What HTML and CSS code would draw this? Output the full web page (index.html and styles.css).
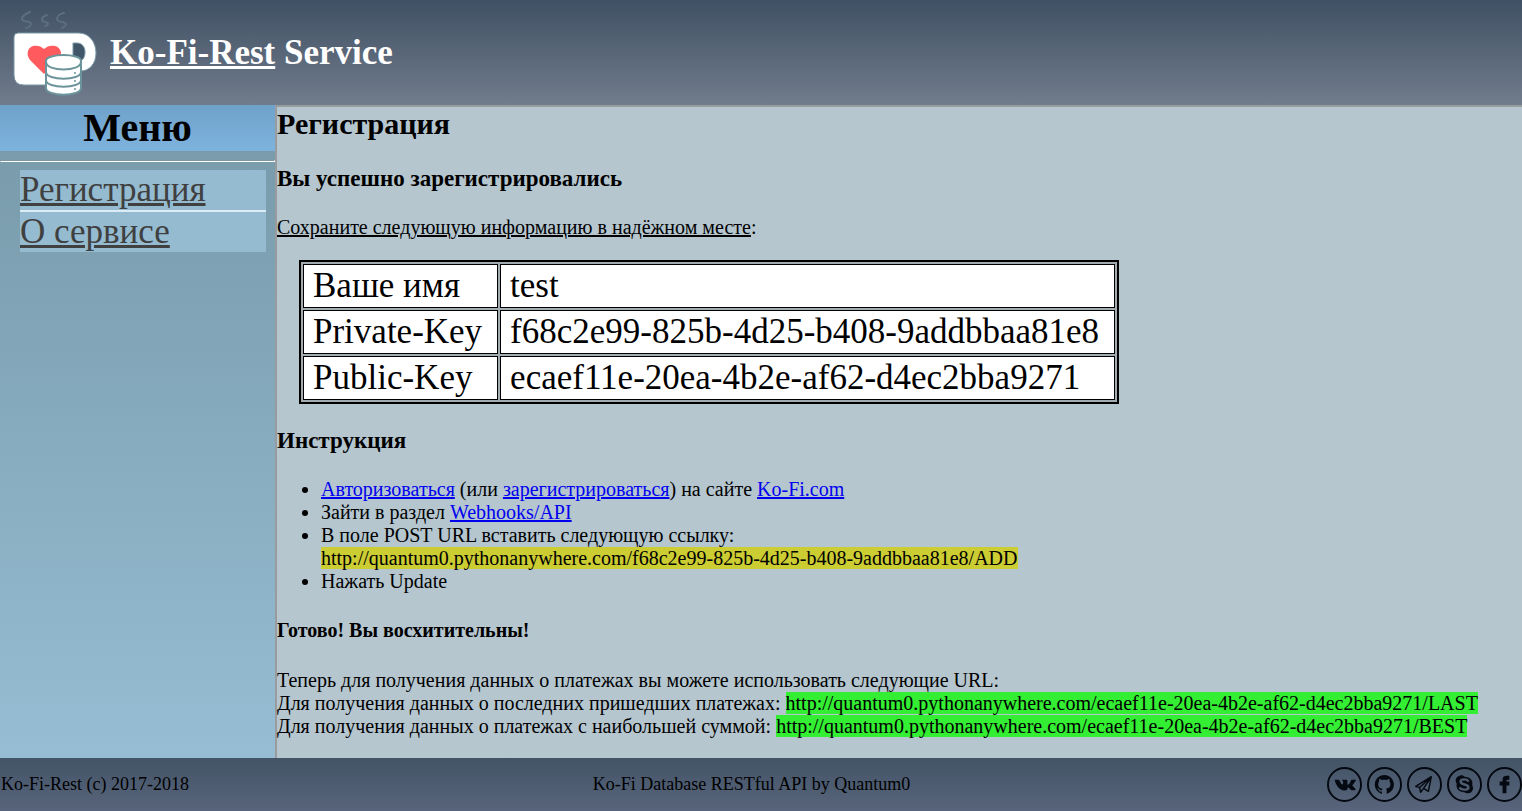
FILE: index.html
```html
<!DOCTYPE html>
<html lang="ru">
<head>
<meta charset="utf-8">
<title>Ko-Fi-Rest Service</title>
<link rel="stylesheet" href="styles.css">
</head>
<body>
<header class="header">
  <svg class="logo" viewBox="0 0 110 105" aria-hidden="true">
    <g fill="none" stroke="#5d6e80" stroke-width="2" stroke-linecap="round" stroke-linejoin="round">
      <path d="M30 12c-5 2-8 4-8 7 0 4 9 1 9 5 0 2-3 4-5 4"/>
      <path d="M47 15c-4 1-5 3-5 5 0 3 6 1 6 4 0 1-2 2-3 2"/>
      <path d="M64 13c-5 1-7 4-7 6 0 4 9 2 9 5 0 2-2 3-4 4"/>
    </g>
    <path fill="#fff" stroke="#7898a4" stroke-width="1" d="M18 33H79c10 0 17 9 17 20s-7 18-15 18l-9 14H24q-10 0-10-10V37q0-4 4-4Z"/>
    <path fill="#42566a" stroke="#7898a4" stroke-width="1" d="M73 43h4c5 0 8 4 8 9 0 5-2 8-5 9l-7-3Z"/>
    <path fill="#ff5b5f" d="M44 74 30 60c-4-5-3-12 3-14 4-1 8 0 11 3 3-3 7-4 11-3 4 1 6 4 6 8Z"/>
    <path fill="#fff" stroke="#6b949b" stroke-width="2" d="M46 61c0-8 35-8 35 0v27c0 9-35 9-35 0Z"/>
    <path fill="none" stroke="#6b949b" stroke-width="2" d="M46 62c0 10 35 10 35 0M46 72c0 9 35 9 35 0M46 80c0 9 35 9 35 0"/>
    <g fill="#6b949b"><circle cx="75" cy="73" r="1"/><circle cx="75" cy="81" r="1"/><circle cx="75" cy="89" r="1"/></g>
  </svg>
  <h1 class="brand"><a href="#">Ko-Fi-Rest</a> Service</h1>
</header>
<div class="layout">
  <nav class="sidebar" aria-labelledby="menu-title">
    <h2 class="menu-title" id="menu-title">Меню</h2>
    <hr class="menu-rule">
    <ul class="menu">
      <li><a href="#">Регистрация</a></li>
      <li><a href="#">О сервисе</a></li>
    </ul>
  </nav>
  <main class="content">
    <h2 class="page-title">Регистрация</h2>
    <h3 class="section-title">Вы успешно зарегистрировались</h3>
    <p class="note"><u>Сохраните следующую информацию в надёжном месте</u>:</p>
    <table class="keys">
      <tr><th scope="row">Ваше имя</th><td>test</td></tr>
      <tr><th scope="row">Private-Key</th><td>f68c2e99-825b-4d25-b408-9addbbaa81e8</td></tr>
      <tr><th scope="row">Public-Key</th><td>ecaef11e-20ea-4b2e-af62-d4ec2bba9271</td></tr>
    </table>
    <h3 class="section-title">Инструкция</h3>
    <ul class="steps">
      <li><a href="#">Авторизоваться</a> (или <a href="#">зарегистрироваться</a>) на сайте <a href="#">Ko-Fi.com</a></li>
      <li>Зайти в раздел <a href="#">Webhooks/API</a></li>
      <li>В поле POST URL вставить следующую ссылку:<br><span class="mark-yellow">http://quantum0.pythonanywhere.com/f68c2e99-825b-4d25-b408-9addbbaa81e8/ADD</span></li>
      <li>Нажать Update</li>
    </ul>
    <h4 class="done">Готово! Вы восхитительны!</h4>
    <p class="urls">Теперь для получения данных о платежах вы можете использовать следующие URL:<br>
    Для получения данных о последних пришедших платежах: <span class="mark-green">http://quantum0.pythonanywhere.com/ecaef11e-20ea-4b2e-af62-d4ec2bba9271/LAST</span><br>
    Для получения данных о платежах с наибольшей суммой: <span class="mark-green">http://quantum0.pythonanywhere.com/ecaef11e-20ea-4b2e-af62-d4ec2bba9271/BEST</span></p>
  </main>
</div>
<footer class="footer">
  <span>Ko-Fi-Rest (c) 2017-2018</span>
  <span class="about">Ko-Fi Database RESTful API by Quantum0</span>
  <div class="social">
    <a href="#" aria-label="VK"><svg viewBox="0 0 36 36"><circle cx="18" cy="18" r="17"/><path d="M8 13h4l1 1c1 3 2 4 3 4 1-1 1-4-1-5h5l1 1v4c1 1 3-2 4-5h4c1 0 1 1 0 2l-3 4 3 3c1 1 0 2-1 2h-3l-3-3c-1 0-1 1-1 2l-1 1c-6 1-10-3-12-10Z"/></svg></a>
    <a href="#" aria-label="GitHub"><svg viewBox="0 0 36 36"><circle cx="18" cy="18" r="17"/><path transform="translate(8 8) scale(.82)" d="M12 .297c-6.63 0-12 5.373-12 12 0 5.303 3.438 9.8 8.205 11.385.6.113.82-.258.82-.577 0-.285-.01-1.04-.015-2.04-3.338.724-4.042-1.61-4.042-1.61C4.422 18.07 3.633 17.7 3.633 17.7c-1.087-.744.084-.729.084-.729 1.205.084 1.838 1.236 1.838 1.236 1.07 1.835 2.809 1.305 3.495.998.108-.776.417-1.305.76-1.605-2.665-.3-5.466-1.332-5.466-5.93 0-1.31.465-2.38 1.235-3.22-.135-.303-.54-1.523.105-3.176 0 0 1.005-.322 3.3 1.23.96-.267 1.98-.399 3-.405 1.02.006 2.04.138 3 .405 2.28-1.552 3.285-1.23 3.285-1.23.645 1.653.24 2.873.12 3.176.765.84 1.23 1.91 1.23 3.22 0 4.61-2.805 5.625-5.475 5.92.42.36.81 1.096.81 2.22 0 1.606-.015 2.896-.015 3.286 0 .315.21.69.825.57C20.565 22.092 24 17.592 24 12.297c0-6.627-5.373-12-12-12"/></svg></a>
    <a href="#" aria-label="Telegram"><svg viewBox="0 0 36 36"><circle cx="18" cy="18" r="17"/><path class="line" d="m9 20 16-10-3 15-5-3-3 4-1-5Zm4 1 12-11-8 12"/></svg></a>
    <a href="#" aria-label="Skype"><svg viewBox="0 0 36 36"><circle cx="18" cy="18" r="17"/><path d="M13 9c2-1 4 0 5 1 6 0 9 4 8 9 2 3 0 8-4 8-2 0-3 0-4-1-6 0-9-4-8-9-2-3-1-7 3-8Z"/><path class="cut" d="M22 15c-1-3-8-3-8 0 0 4 8 2 8 6 0 3-8 3-9 0"/></svg></a>
    <a href="#" aria-label="Facebook"><svg viewBox="0 0 36 36"><circle cx="18" cy="18" r="17"/><path d="M16 27v-8h-3v-4h3v-2c0-3 2-4 4-4h3v4h-2q-1 0-1 1v1h3v4h-3v8Z"/></svg></a>
  </div>
</footer>
</body>
</html>
```

FILE: styles.css
```css
* { box-sizing: border-box; }

body {
  margin: 0;
  min-height: 100vh;
  display: flex;
  flex-direction: column;
  background: #b5c6cf;
  color: #000;
  font-family: "Liberation Serif", "Times New Roman", serif;
  font-size: 20px;
  line-height: 23px;
}

h1, h2, h3, h4, p, ul { margin: 0; padding: 0; }

.header {
  display: flex;
  align-items: center;
  background: linear-gradient(#405064, #717c8c);
  color: #fff;
}

.logo { width: 110px; height: 105px; display: block; }
.brand { font-size: 35px; line-height: 42px; }
.brand a { color: inherit; }

.layout { flex: 1; display: flex; }

.sidebar {
  flex: 0 0 275px;
  background: linear-gradient(#7799a9, #96bdd3);
}

.menu-title {
  background: linear-gradient(#6fa2ca, #7eb3de);
  font-size: 40px;
  line-height: 46px;
  text-align: center;
}

.menu-rule {
  margin: 9px 0 8px;
  border: 1px solid #fff;
  border-top-color: #8096a0;
  border-left-color: #8096a0;
}

.menu { list-style: none; padding: 0 9px 0 20px; }
.menu li {
  background: #94bbd0;
  font-size: 35px;
  line-height: 40px;
}
.menu li + li { border-top: 2px solid #dcebf4; }
.menu a { color: #404040; }

.content {
  flex: 1;
  min-width: 0;
  border-top: 2px solid #989c9f;
  border-left: 2px solid #989c9f;
  padding-bottom: 20px;
}

.page-title { font-size: 30px; line-height: 33px; }
.section-title { margin: 24px 0; font-size: 23px; line-height: 26px; }
.page-title + .section-title { margin-top: 26px; }

.keys {
  margin: 21px 0 24px 22px;
  border: 2px solid #000;
  border-spacing: 2px;
  background: #a3adb1;
  font-size: 35px;
  line-height: 42px;
}
.keys th, .keys td {
  padding: 0 15px 0 9px;
  border: 1px solid #000;
  background: #fff;
  font-weight: normal;
  text-align: left;
}

.steps { padding-left: 44px; }
.steps a { color: #00e; }
.done { margin: 26px 0 27px; font-size: 20px; }
.mark-yellow { background: #cc3; }
.mark-green { background: #3e3; }

.footer {
  display: grid;
  grid-template-columns: 1fr auto 1fr;
  align-items: center;
  min-height: 53px;
  padding-left: 1px;
  background: linear-gradient(#435466, #58647b);
  font-size: 18px;
}
.about { padding-right: 20px; }

.social { display: flex; justify-content: flex-end; gap: 5px; }
.social a { display: block; color: #050a12; }
.social svg { display: block; width: 35px; height: 35px; fill: currentColor; }
.social circle, .social .line { fill: none; stroke: currentColor; stroke-width: 2; }
.social .line { stroke-width: 1.5; stroke-linejoin: round; }
.social .cut { fill: none; stroke: #4f5d71; stroke-width: 2.5; }
```
